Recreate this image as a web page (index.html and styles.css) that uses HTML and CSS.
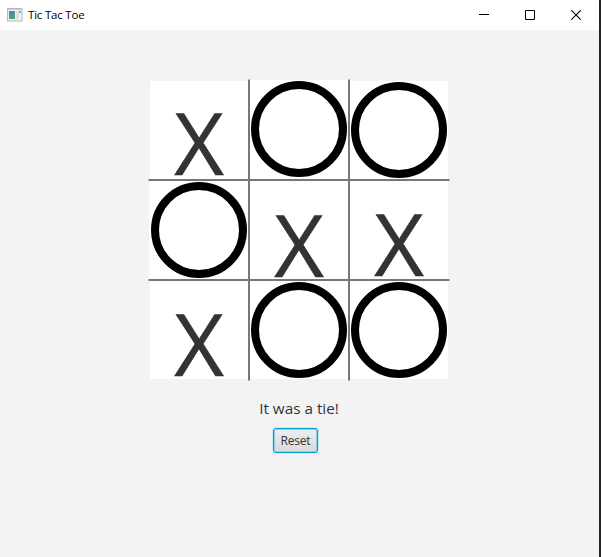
FILE: index.html
```html
<!DOCTYPE html>
<html lang="en">
<head>
<meta charset="utf-8">
<title>Tic Tac Toe</title>
<link rel="stylesheet" href="styles.css">
</head>
<body>
<div class="window">
  <header class="titlebar">
    <svg class="app-icon" width="16" height="14" viewBox="0 0 16 14">
      <defs><linearGradient id="pane" x1="0" y1="0" x2="1" y2="1"><stop offset="0" stop-color="#4b83a8"/><stop offset="1" stop-color="#59a47c"/></linearGradient></defs>
      <rect x=".5" y=".5" width="14.5" height="12.5" fill="#f0f0f1" stroke="#b5b8bf"/>
      <path d="M1 1.5h14" stroke="#c9ccd3"/>
      <rect x="2" y="3" width="6" height="8" fill="url(#pane)"/>
      <rect x="9" y="3" width="3" height="8" fill="#dedfe1"/>
      <rect x="12" y="3" width="2" height="2" fill="#7eb3a5"/>
      <rect x="12" y="5" width="2" height="6" fill="#f4f4f4"/>
    </svg>
    <span class="title">Tic Tac Toe</span>
    <div class="controls">
      <svg width="11" height="11" viewBox="0 0 11 11"><path d="M0 4.5h10" stroke="#000"/></svg>
      <svg width="11" height="11" viewBox="0 0 11 11"><path d="M.5 .5h9v9h-9z" fill="none" stroke="#000"/></svg>
      <svg width="11" height="11" viewBox="0 0 11 11"><path d="M.3 .3l9.4 9.4M9.7 .3L.3 9.7" stroke="#000" stroke-width="1.1"/></svg>
    </div>
  </header>
  <main class="content">
    <div class="board">
      <div class="cell first top"><span class="x">X</span></div>
      <div class="cell raised"><div class="o"></div></div>
      <div class="cell last top"><div class="o"></div></div>
      <div class="cell"><div class="o"></div></div>
      <div class="cell lowered"><span class="x">X</span></div>
      <div class="cell last"><span class="x">X</span></div>
      <div class="cell first bottom"><span class="x">X</span></div>
      <div class="cell bottom"><div class="o"></div></div>
      <div class="cell last bottom"><div class="o"></div></div>
      <svg class="lines" width="302" height="302" viewBox="0 0 302 302"><path d="M101 .5v301M201 .5v301M.5 101h301M.5 201h301"/></svg>
    </div>
    <p class="status">It was a tie!</p>
    <button class="reset">Reset</button>
  </main>
</div>
</body>
</html>
```

FILE: styles.css
```css
* { box-sizing: border-box; }
body {
  margin: 0;
  background: #f3f3f3;
  font-family: "Open Sans", "Noto Sans", sans-serif;
}
.window {
  height: 557px;
  border-right: 2px solid #222;
  overflow: hidden;
}
.titlebar {
  display: flex;
  align-items: center;
  height: 30px;
  padding: 0 18px 0 7px;
  background: #fff;
}
.app-icon { margin-right: 5px; }
.title {
  margin-top: -1px;
  font-size: 11.5px;
  letter-spacing: -0.2px;
  color: #000;
}
.controls {
  display: flex;
  gap: 35px;
  margin-left: auto;
  margin-right: -1px;
}
.content {
  display: flex;
  flex-direction: column;
  align-items: center;
  padding: 50px 1px 0 0;
}
.board {
  position: relative;
  display: grid;
  grid-template-columns: repeat(3, 100px);
  grid-template-rows: repeat(3, 100px);
}
.cell {
  display: flex;
  justify-content: center;
  padding-top: 2px;
  background: #fff;
  border: 0 solid #f3f3f3;
}
.first { border-left-width: 1px; padding-right: 1px; }
.last { border-right-width: 1px; }
.last .o,
.last .x { margin-right: -1px; }
.top { border-top-width: 1px; padding-top: 1px; }
.bottom { border-bottom-width: 1px; }
.raised { padding-top: 1px; }
.lowered { padding-top: 3px; }
.o {
  width: 96px;
  height: 96px;
  border: 8px solid #000;
  border-radius: 50%;
}
.x {
  height: 96px;
  font-size: 86px;
  line-height: 122px;
  color: #333;
  -webkit-text-stroke: 0.5px #333;
}
.top .x { line-height: 120px; }
.lines {
  position: absolute;
  top: -1px;
  left: -1px;
  fill: none;
  stroke: #777;
  stroke-width: 2px;
}
.status {
  margin: 17px 0 0;
  font-size: 15.3px;
  line-height: 22px;
  color: #333;
}
.reset {
  width: 45px;
  height: 25px;
  margin: 9px 7px 0 0;
  padding: 0;
  border: 1px solid #039ed3;
  border-radius: 3px;
  background: linear-gradient(#eee, #dadada);
  box-shadow: 0 0 0 1px #cdeaf3, inset 0 0 0 1px #8fd0e6;
  font: 12px "Open Sans", "Noto Sans", sans-serif;
  letter-spacing: -0.2px;
  color: #333;
}
```
